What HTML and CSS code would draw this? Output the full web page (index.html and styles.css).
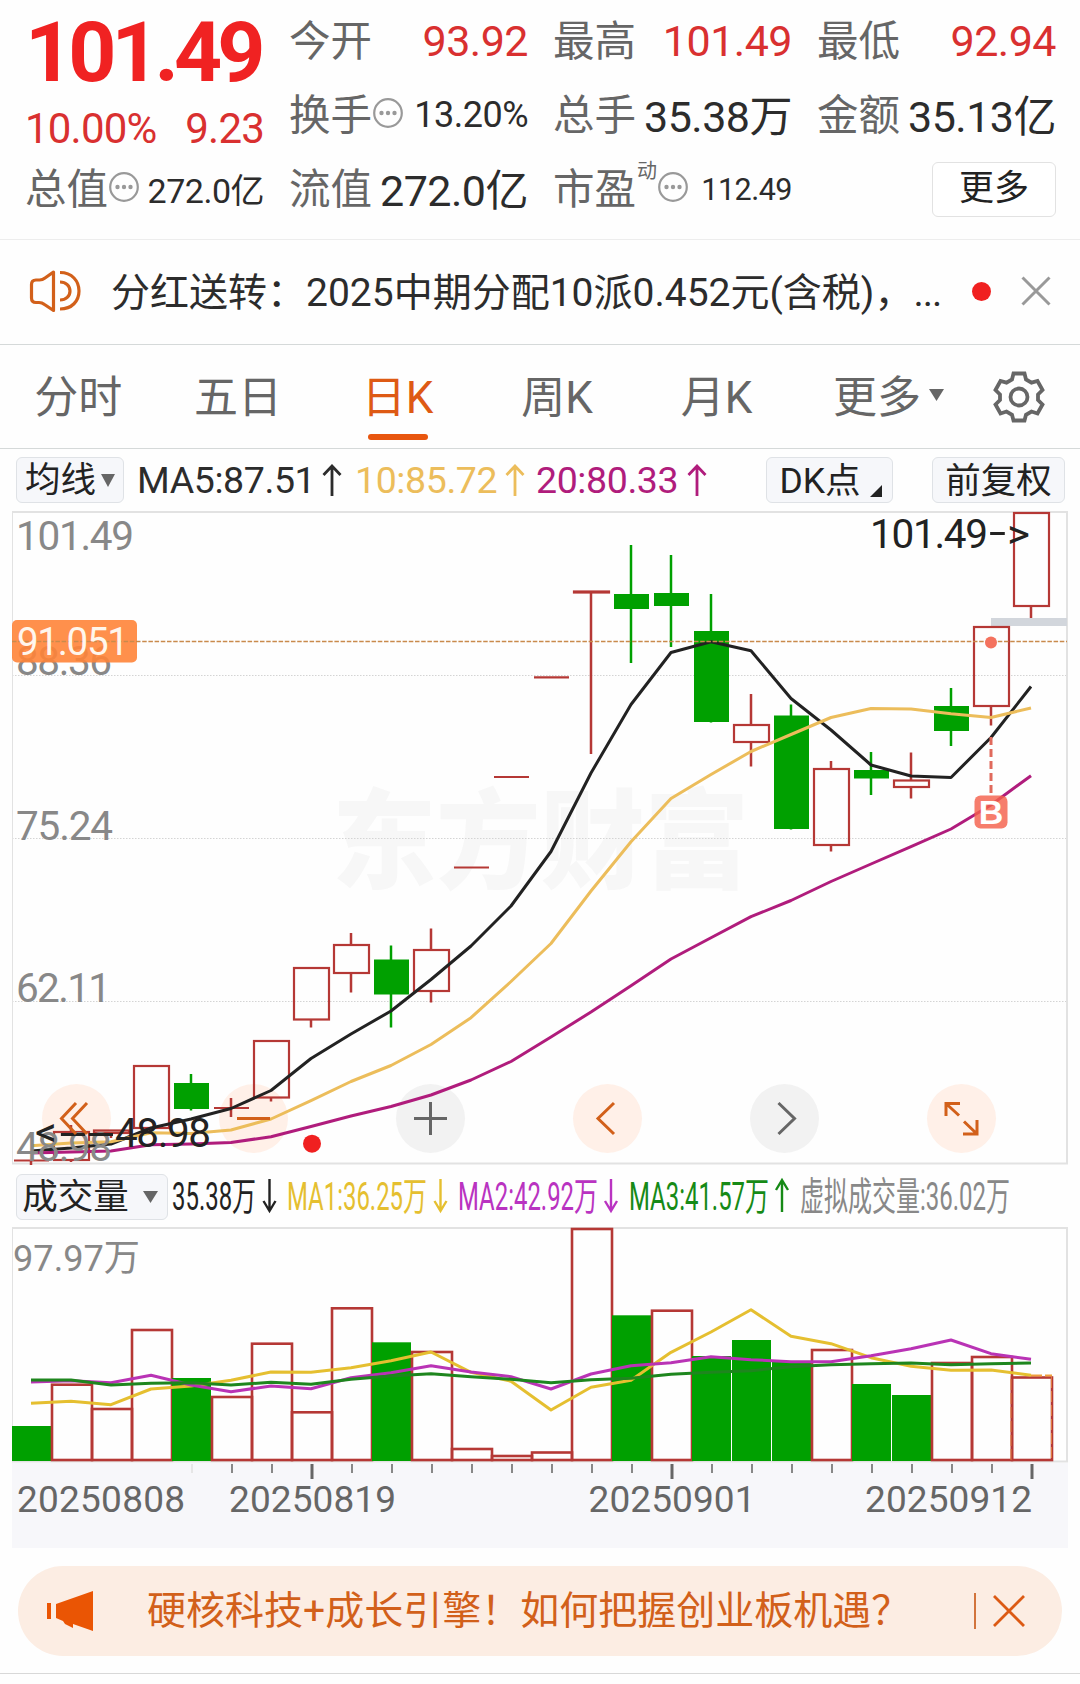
FILE: index.html
```
<!DOCTYPE html>
<html lang="zh-CN">
<head>
  <meta charset="UTF-8" />
  <title>日K</title>
  <meta name="viewport" content="width=device-width, initial-scale=1" />
  <link rel="stylesheet" href="styles.css">
</head>
<body>
  <svg class="defs" width="0" height="0">
    <symbol id="more-dots" viewBox="0 0 30 30">
      <circle cx="15" cy="15" r="13.8" fill="none" stroke="#999" stroke-width="2.2" />
      <circle cx="8.5" cy="15" r="2.2" fill="#999" />
      <circle cx="15" cy="15" r="2.2" fill="#999" />
      <circle cx="21.5" cy="15" r="2.2" fill="#999" />
    </symbol>
    <symbol id="arrow-up" viewBox="0 0 20 32">
      <path d="M10 32V2M1.5 11 10 2l8.500 9" fill="none" stroke="currentColor" stroke-width="2.8" />
    </symbol>
  </svg>

  <section class="quote">
    <div class="price">
      <div class="last">101.49</div>
      <div class="change"><span>10.00%</span><span>9.23</span></div>
    </div>
    <div class="cell"><span class="label">今开</span><span class="value red">93.92</span></div>
    <div class="cell"><span class="label">最高</span><span class="value red">101.49</span></div>
    <div class="cell"><span class="label">最低</span><span class="value red">92.94</span></div>
    <div class="cell"><span class="label">换手</span><svg class="dots"><use href="#more-dots" /></svg><span class="value mid">13.20%</span></div>
    <div class="cell"><span class="label">总手</span><span class="value unit">35.38万</span></div>
    <div class="cell"><span class="label">金额</span><span class="value unit">35.13亿</span></div>
    <div class="cell"><span class="label">总值</span><svg class="dots"><use href="#more-dots" /></svg><span class="value small">272.0亿</span></div>
    <div class="cell"><span class="label">流值</span><span class="value unit">272.0亿</span></div>
    <div class="cell"><span class="label">市盈</span><span class="sup">动</span><svg class="dots"><use href="#more-dots" /></svg><span class="value tiny">112.49</span></div>
    <div class="cell"><button class="more">更多</button></div>
  </section>

  <section class="notice">
    <svg class="speaker" viewBox="0 0 52 42" fill="none" stroke="#d2601a" stroke-width="3.2" stroke-linejoin="round">
      <path d="M24.500 2 16 8Q13.500 10 10.500 10H7Q2.500 10 2.500 14.500V28Q2.500 32.500 7 32.500H10Q13 32.500 15.500 34.500L24.500 40.500Z" />
      <path d="M31 2.500C43 2.500 50 11 50 21S43 39 31 39M31 12C37 12 41 16 41 21S37 30 31 30" />
    </svg>
    <p>分红送转：2025中期分配10派0.452元(含税)，<span class="ellipsis">...</span></p>
    <i class="dot"></i>
    <svg class="close" viewBox="0 0 30 30"><path d="M1.500 1.500l27 27M28.500 1.500l-27 27" stroke="#999" stroke-width="3" /></svg>
  </section>

  <nav class="tabs">
    <a>分时</a>
    <a>五日</a>
    <a class="active">日K</a>
    <a>周K</a>
    <a>月K</a>
    <a class="tab-more">更多<svg width="15" height="12" viewBox="0 0 15 12"><path d="M0 0h15L7.500 12z" fill="#666" /></svg></a>
    <svg class="gear" viewBox="0 0 52 52" fill="none" stroke="#666" stroke-width="3.800">
      <path d="M20.500 2.500H31.500L33 8.500L38.500 11.700L44.500 10L49.500 19L45 23.500V29L49.500 33.500L44.500 42.500L38.500 40.500L33 43.800L31.500 49.500H20.500L19 43.800L13.500 40.500L7.500 42.500L2.500 33.500L7 29V23.500L2.500 19L7.500 10L13.500 11.700L19 8.500Z" />
      <circle cx="26" cy="26" r="8.500" />
    </svg>
  </nav>

  <section class="ma-bar">
    <button class="chip chip-ma">均线<svg width="14" height="13" viewBox="0 0 14 13"><path d="M0 0h14L7 13z" fill="#666" /></svg></button>
    <span class="ma ma5"><b>MA5:87.51</b><svg><use href="#arrow-up" /></svg></span>
    <span class="ma ma10"><b>10:85.72</b><svg><use href="#arrow-up" /></svg></span>
    <span class="ma ma20"><b>20:80.33</b><svg><use href="#arrow-up" /></svg></span>
    <button class="chip chip-dk">DK点<svg width="12" height="12" viewBox="0 0 12 12"><path d="M12 0v12H0z" fill="#222" /></svg></button>
    <button class="chip chip-fq">前复权</button>
  </section>

  <svg class="kline" viewBox="0 505 1080 664">
    <text class="watermark" x="332" y="880" textLength="417" lengthAdjust="spacingAndGlyphs">东方财富</text>
    <path class="grid" d="M12 675.500H1067M12 838.500H1067M12 1001.500H1067" />
    <path class="frame thin" d="M12.500 512V1164" />
    <path class="frame" d="M12 512H1067V1163.500H12" />

    <g class="tools">
      <circle class="warm" cx="76.500" cy="1118.500" r="34.500" />
      <circle class="warm" cx="253.500" cy="1118.500" r="34.500" />
      <circle class="cool" cx="430.500" cy="1118.500" r="34.500" />
      <circle class="warm" cx="607.500" cy="1118.500" r="34.500" />
      <circle class="cool" cx="784.500" cy="1118.500" r="34.500" />
      <circle class="warm" cx="961.500" cy="1118.500" r="34.500" />
    </g>

    <rect x="991" y="618" width="76" height="8" fill="#d2d6dc" />
    <g id="candles"></g>
    <g id="maLines"></g>

    <g class="axis">
      <text x="16" y="550" textLength="118">101.49</text>
      <text x="16" y="675" textLength="96">88.36</text>
      <text x="16" y="839.500" textLength="97">75.24</text>
      <text x="16" y="1002" textLength="95">62.11</text>
      <text x="16" y="1161" textLength="96">48.98</text>
    </g>

    <rect x="12" y="620" width="125" height="42.500" rx="5" fill="#ff8438" fill-opacity="0.9" />
    <path d="M12 641.500H1067" stroke="#c98a4c" stroke-width="1.500" stroke-dasharray="4.500 1.700" />
    <text class="cost" x="17" y="654.500" textLength="112">91.051</text>

    <g class="extreme">
      <text x="870" y="548" textLength="118">101.49</text>
      <text x="989" y="546" textLength="17" lengthAdjust="spacingAndGlyphs">-</text>
      <text x="1007" y="548" textLength="23" lengthAdjust="spacingAndGlyphs">&gt;</text>
      <text x="35" y="1146" textLength="22" lengthAdjust="spacingAndGlyphs">&lt;</text>
      <text x="59" y="1147" textLength="56" lengthAdjust="spacingAndGlyphs">--</text>
      <text x="115" y="1146.500" textLength="96">48.98</text>
    </g>

    <!-- buy mark -->
    <circle cx="991" cy="642.500" r="6" fill="#f4725e" />
    <path d="M991 737V795" stroke="#e06a5c" stroke-width="3" stroke-dasharray="8 4" />
    <rect x="974.500" y="795.500" width="33" height="33" rx="6" fill="#f4604c" fill-opacity="0.820" />
    <text class="buy" x="991" y="823.500">B</text>

    <circle cx="312" cy="1143.700" r="9" fill="#f02020" />

    <g class="tool-icons">
      <path d="M76 1103 61.500 1118.500 76 1134M87 1103 72.500 1118.500 87 1134" />
      <path d="M237 1118.500H270" />
      <path class="dark" d="M414 1118.500H447M430.500 1102V1135" />
      <path d="M614 1103 598 1118.500 614 1134" />
      <path class="dark" d="M778.500 1103 794.500 1118.500 778.500 1134" />
      <path d="M946 1116V1103.500H960M946 1103.500 959 1115.500M964 1121.500 977 1134M977 1120V1134H963" />
    </g>
  </svg>

  <section class="vol-bar">
    <button class="chip chip-vol">成交量<svg width="15" height="12" viewBox="0 0 15 12"><path d="M0 0h15L7.500 12z" fill="#666" /></svg></button>
    <svg class="vol-text" viewBox="168 1169 912 55">
      <g fill="#222" stroke="#222">
        <text x="172" y="1209.500" textLength="84" lengthAdjust="spacingAndGlyphs">35.38万</text>
        <path d="M269.500 1179V1211M263.500 1201 269.500 1211 275.500 1201" />
      </g>
      <g fill="#e5bf30" stroke="#e5bf30">
        <text x="287" y="1209.500" textLength="140" lengthAdjust="spacingAndGlyphs">MA1:36.25万</text>
        <path d="M440.500 1179V1211M434.500 1201 440.500 1211 446.500 1201" />
      </g>
      <g fill="#b933c1" stroke="#b933c1">
        <text x="458" y="1209.500" textLength="140" lengthAdjust="spacingAndGlyphs">MA2:42.92万</text>
        <path d="M611 1179V1211M605 1201 611 1211 617 1201" />
      </g>
      <g fill="#168a16" stroke="#168a16">
        <text x="629" y="1209.500" textLength="140" lengthAdjust="spacingAndGlyphs">MA3:41.57万</text>
        <path d="M782 1212V1180M776 1190 782 1180 788 1190" />
      </g>
      <g fill="#888" stroke="#888">
        <text x="800" y="1209.500" textLength="210" lengthAdjust="spacingAndGlyphs">虚拟成交量:36.02万</text>
      </g>
    </svg>
  </section>

  <svg class="volume" viewBox="0 1224 1080 330">
    <rect x="12" y="1463" width="1056" height="85" fill="#f7f7fa" />
    <path class="frame thin" d="M12.500 1228V1461" />
    <path class="frame" d="M12 1228H1067V1461.500H12" />
    <g id="bars"></g>
    <g id="volLines"></g>
    <path d="M1031 1375.500H1052" fill="none" stroke="#f0a03c" stroke-width="2" stroke-dasharray="11 3" />
    <path d="M1011 1460V1377M1051.500 1377V1460" fill="none" stroke="#e07a3c" stroke-width="1" stroke-dasharray="11 3" />
    <g id="ticks"></g>
    <text class="vol-max" x="13" y="1271" textLength="127" lengthAdjust="spacingAndGlyphs">97.97万</text>
    <g class="dates">
      <text x="17" y="1512" textLength="168">20250808</text>
      <text x="229" y="1512" textLength="167">20250819</text>
      <text x="588.500" y="1512" textLength="167">20250901</text>
      <text x="865" y="1512" textLength="167">20250912</text>
    </g>
  </svg>

  <section class="banner">
    <svg class="horn" viewBox="0 0 47 40" fill="#ea5504">
      <path d="M0 12h4v16H0zM9 13 46 0v40L26 33V37L18 33 16 30 9 27z" />
    </svg>
    <p>硬核科技+成长引擎！如何把握创业板机遇？</p>
    <i class="divider"></i>
    <svg class="banner-close" viewBox="0 0 32 32"><path d="M1 1l30 30M31 1L1 31" stroke="#dc5a14" stroke-width="2.800" /></svg>
  </section>
  <div class="bottom-line"></div>

  <script>
    const STEP = 40;
    const START = 31;
    const RED = '#b53835';
    const GREEN = '#00a000';

    // [up, body top, body bottom, high, low]
    const candles = [
      [1, 1160.5, 1160.5, 1160.5, 1165], [1, 1132, 1160, 1125, 1162], [1, 1130.5, 1133, 1130, 1138],
      [1, 1066, 1128, 1066, 1128], [0, 1083, 1109, 1074, 1110.5], [1, 1108, 1108, 1098, 1117],
      [1, 1041, 1097.5, 1041, 1101.5], [1, 968, 1019.5, 968, 1027.5], [1, 945, 973, 933, 992.5],
      [0, 959.5, 994.5, 945.5, 1027.5], [1, 950, 991, 928.5, 1002.5], [1, 867.5, 867.5, 867.5, 867.5],
      [1, 777, 777, 777, 777], [1, 677.3, 677.3, 677.3, 677.3], [1, 591.5, 592.5, 592, 754],
      [0, 594, 609, 545, 663], [0, 593, 606, 555, 647], [0, 631, 722, 594, 722.5],
      [1, 725, 742, 694, 766.5], [0, 715.5, 829, 704.5, 829.5], [1, 769, 845, 761, 851.5],
      [0, 770, 778.5, 752, 795], [1, 780.5, 787, 752.5, 798.5], [0, 706, 731, 688, 746],
      [1, 627, 706, 627, 725.5], [1, 513, 606, 513, 618]
    ];

    const ma = [
      ['#222', [1151, 1148, 1144, 1128, 1119, 1108.5, 1090.5, 1058.5, 1034, 1011, 979.5, 946, 906, 851.5, 773, 704.5, 652.5, 641.7, 650.7, 698.5, 730, 765, 776, 777.5, 737.5, 686.5]],
      ['#ecbd5b', [1145.7, 1143, 1141.7, 1132.7, 1133.5, 1130, 1119, 1100.7, 1081.5, 1065.5, 1044.5, 1017.7, 981.5, 943.5, 891, 841.7, 798.5, 774.5, 751.5, 734.5, 717.5, 708.5, 709, 713.7, 717.5, 708]],
      ['#b01c7c', [1153, 1152, 1151, 1144.7, 1144, 1142.5, 1136.7, 1126.5, 1116, 1106.5, 1095, 1080, 1061.5, 1037, 1012, 985.7, 959, 937.7, 916.7, 900.5, 881.5, 864, 846.7, 829, 805, 775.7]]
    ];

    // [up, bar top]
    const vols = [
      [0, 1426], [1, 1384.7], [1, 1409], [1, 1330], [0, 1378], [1, 1397], [1, 1343.7], [1, 1412.3], [1, 1308.3],
      [0, 1342.3], [1, 1352], [1, 1449], [1, 1456], [1, 1452.5], [1, 1229], [0, 1315.3], [1, 1310.7], [0, 1356],
      [0, 1340], [0, 1361.7], [1, 1350], [0, 1384], [0, 1395], [1, 1363], [1, 1357], [1, 1377.5]
    ];

    const volMa = [
      ['#e5bf30', [1403.3, 1401.3, 1404.7, 1389, 1386, 1380.3, 1372, 1372.3, 1367.7, 1360.7, 1352, 1372.3, 1381.3, 1410, 1387.3, 1380.3, 1352.3, 1332, 1309.7, 1336.3, 1343.7, 1357.7, 1366.3, 1370.3, 1370, 1375.3]],
      ['#b933b5', [1382, 1380.7, 1382.7, 1375.3, 1385, 1391.7, 1386, 1388.7, 1377.7, 1372.7, 1365.7, 1372, 1376.7, 1389, 1374, 1365.7, 1362.7, 1356.7, 1359.7, 1361.7, 1361.7, 1355.7, 1348.7, 1340, 1353.7, 1359.3]],
      ['#1e861e', [1380, 1380, 1385, 1383.3, 1382.7, 1385, 1382.3, 1384.3, 1379.3, 1376, 1373.7, 1376.7, 1379.3, 1382.7, 1379.7, 1378.3, 1374.3, 1372.3, 1370.7, 1366.7, 1364.7, 1363.7, 1363, 1364.7, 1363.7, 1363]]
    ];

    function x(i) {
      return START + i * STEP;
    }

    function drawLines(id, lines) {
      document.getElementById(id).innerHTML = lines.map(([color, ys]) =>
        `<polyline points="${ys.map((y, i) => x(i) + ',' + y).join(' ')}" fill="none" stroke="${color}" stroke-width="3" stroke-linejoin="round" />`
      ).join('');
    }

    document.getElementById('candles').innerHTML = candles.map(([up, top, bottom, high, low], i) => {
      const cx = x(i);
      if (!up) {
        return `<path d="M${cx} ${high}V${low}" stroke="${GREEN}" stroke-width="2.5" />
          <rect x="${cx - 17}" y="${top}" width="35" height="${bottom - top}" fill="${GREEN}" />`;
      }
      const wick = `<path d="M${cx} ${high}V${top}M${cx} ${bottom}V${low}" stroke="${RED}" stroke-width="2.5" />`;
      if (top === bottom) {
        return wick + `<path d="M${cx - 17} ${top}H${cx + 18}" stroke="${RED}" stroke-width="2.2" />`;
      }
      return wick + `<rect x="${cx - 17}" y="${top}" width="35" height="${bottom - top}" fill="none" stroke="${RED}" stroke-width="2.2" />`;
    }).join('');

    document.getElementById('bars').innerHTML = vols.map(([up, top], i) => {
      const left = x(i) - 19;
      if (up) {
        return `<rect x="${left}" y="${top}" width="40" height="${1460 - top}" fill="none" stroke="${RED}" stroke-width="2.6" />`;
      }
      return `<rect x="${left}" y="${top}" width="39" height="${1461 - top}" fill="${GREEN}" />`;
    }).join('');

    drawLines('maLines', ma);
    drawLines('volLines', volMa);

    let ticks = '';
    for (let i = 4; i < 26; i++) {
      const major = i === 7 || i === 16 || i === 25;
      const color = i === 4 ? '#e6e6e6' : major ? '#666' : '#888';
      ticks += `<path d="M${x(i) + 1} 1464V${major ? 1479 : 1473}" stroke="${color}" stroke-width="${major ? 3 : 2}" />`;
    }
    document.getElementById('ticks').innerHTML = ticks;
  </script>
</body>
</html>
```
FILE: styles.css
```
* {
  box-sizing: border-box;
}
body {
  margin: 0;
  width: 1080px;
  height: 1684px;
  overflow: hidden;
  background: #fefefe;
  color: #2c2c2c;
  font-family: Roboto, "Noto Sans CJK SC", sans-serif;
}
p {
  margin: 0;
}
button {
  font-family: inherit;
  color: #222;
  padding: 0;
}
svg {
  display: block;
  flex: none;
}
.defs {
  display: none;
}

/* quote header */
.quote {
  display: grid;
  grid-template-columns: repeat(4, 239px);
  grid-template-rows: repeat(3, 74px);
  column-gap: 25px;
  padding: 4px 24px 0 25px;
  height: 240px;
  border-bottom: 1px solid #ededed;
}
.price {
  grid-row: span 2;
}
.last {
  height: 96px;
  line-height: 98px;
  font-size: 84px;
  font-weight: 700;
  letter-spacing: -5px;
  color: #f02222;
}
.change {
  display: flex;
  justify-content: space-between;
  height: 56px;
  line-height: 58px;
  font-size: 42px;
  letter-spacing: -0.8px;
  color: #d93030;
}
.cell {
  display: flex;
  align-items: center;
  white-space: nowrap;
}
.label {
  padding-bottom: 6px;
  font-size: 41.5px;
  color: #666;
}
.value {
  margin-left: auto;
  font-size: 43px;
  letter-spacing: -0.5px;
}
.unit {
  padding-bottom: 5px;
}
.red {
  color: #d93030;
}
.mid {
  font-size: 36px;
}
.small {
  padding-bottom: 2px;
  font-size: 34px;
}
.tiny {
  font-size: 30.5px;
}
.dots {
  width: 30px;
  height: 30px;
  margin: -4px 0 0 1px;
}
.sup {
  align-self: flex-start;
  margin: 3px 0 0 1px;
  font-size: 20px;
  color: #666;
}
.more {
  margin-left: auto;
  width: 124px;
  height: 55px;
  border: 1.5px solid #e2e2e2;
  border-radius: 6px;
  background: #fff;
  font-size: 35px;
  line-height: 48px;
}

/* notice */
.notice {
  display: flex;
  align-items: center;
  height: 105px;
  padding: 0 0 2px 29px;
  border-bottom: 1px solid #d5d9d9;
  font-size: 39px;
  white-space: nowrap;
}
.speaker {
  width: 52px;
  height: 42px;
}
.notice p {
  width: 890px;
  padding: 0 0 5px 30px;
}
.ellipsis {
  letter-spacing: -1px;
}
.dot {
  width: 19px;
  height: 19px;
  margin-left: 1px;
  border-radius: 50%;
  background: #f02020;
}
.close {
  width: 30px;
  height: 30px;
  margin-left: 30px;
}

/* period tabs */
.tabs {
  display: flex;
  align-items: center;
  height: 104px;
  border-bottom: 1px solid #d5d9d9;
  font-size: 44px;
  color: #666;
}
.tabs a {
  display: flex;
  justify-content: center;
  align-items: center;
  width: 159.6px;
  height: 103px;
  padding: 0 3px 6px 0;
}
.tabs .active {
  position: relative;
  color: #de5a14;
}
.active::after {
  content: "";
  position: absolute;
  left: 50%;
  bottom: 8px;
  width: 60px;
  height: 6px;
  margin-left: -31px;
  border-radius: 3px;
  background: #e8560f;
}
.tabs .tab-more {
  width: 195px;
  justify-content: flex-start;
  padding-left: 35px;
}
.tab-more svg {
  margin: 3px 0 0 8px;
}
.gear {
  width: 52px;
  height: 52px;
}

/* ma row */
.ma-bar {
  display: flex;
  align-items: flex-start;
  height: 56px;
  padding: 8px 0 0 16px;
}
.chip {
  display: flex;
  justify-content: center;
  align-items: center;
  height: 46px;
  border: 1.5px solid #dfe2e6;
  border-radius: 6px;
  background: #f6f7fa;
  font-size: 35.5px;
  line-height: 40px;
  white-space: nowrap;
}
.chip-ma {
  width: 108px;
}
.chip-ma svg {
  margin-left: 5px;
}
.chip-dk {
  width: 127px;
  margin-left: 59px;
  padding: 2px 0 0 2px;
}
.chip-dk svg {
  align-self: flex-end;
  margin: 0 0 5px 9px;
}
.chip-fq {
  width: 133px;
  margin-left: 39px;
  padding-top: 2px;
}
.ma {
  display: flex;
  justify-content: space-between;
  align-items: center;
  height: 46px;
  font-size: 37.5px;
  letter-spacing: -0.4px;
}
.ma b {
  font-weight: 400;
}
.ma svg {
  width: 20px;
  height: 32px;
}
.ma5 {
  width: 205px;
  margin-left: 13px;
}
.ma10 {
  width: 170px;
  margin-left: 13px;
  color: #ecbd5b;
}
.ma20 {
  width: 171px;
  margin-left: 11px;
  color: #b01c7c;
}

/* k-line chart */
.kline {
  width: 1080px;
  height: 664px;
}
.frame {
  fill: none;
  stroke: #e2e2e2;
  stroke-width: 2;
}
.thin {
  stroke-width: 1;
}
.grid {
  stroke: #d4d4d4;
  stroke-width: 1;
  stroke-dasharray: 1.5 1.5;
}
.watermark {
  font-size: 108px;
  font-weight: 900;
  fill: #f7f7f7;
}
.warm {
  fill: #fff0e8;
}
.cool {
  fill: #f2f2f2;
}
.axis text {
  font-size: 40.5px;
  fill: #888;
}
.cost {
  font-size: 38.5px;
  fill: #fff6ec;
}
.extreme text {
  font-size: 40.5px;
  fill: #222;
}
.buy {
  font-family: "Liberation Sans", sans-serif;
  font-size: 34px;
  font-weight: 700;
  text-anchor: middle;
  fill: #fff;
}
.tool-icons path {
  fill: none;
  stroke: #d2601a;
  stroke-width: 3;
}
.tool-icons .dark {
  stroke: #666;
}

/* volume */
.vol-bar {
  display: flex;
  height: 55px;
  padding: 5px 0 0 16px;
}
.chip-vol {
  width: 152px;
  padding-right: 4px;
  font-size: 35.5px;
}
.chip-vol svg {
  margin-left: 14px;
}
.vol-text {
  width: 912px;
  height: 55px;
  margin-top: -5px;
  overflow: visible;
  font-size: 38.5px;
}
.vol-text text {
  stroke: none;
}
.vol-text path {
  fill: none;
  stroke-width: 2.4;
}
.volume {
  width: 1080px;
  height: 330px;
}
.vol-max {
  font-size: 37px;
  fill: #888;
}
.dates {
  font-size: 37px;
  fill: #666;
}

/* banner */
.banner {
  display: flex;
  align-items: center;
  height: 90px;
  margin: 12px 18px 0;
  padding-left: 29px;
  border-radius: 45px;
  background: #fcede3;
  color: #d2601a;
  font-size: 39px;
  white-space: nowrap;
}
.horn {
  width: 47px;
  height: 40px;
}
.banner p {
  width: 880px;
  padding: 0 0 8px 53px;
}
.divider {
  width: 1.5px;
  height: 36px;
  background: #d2743c;
}
.banner-close {
  width: 32px;
  height: 32px;
  margin-left: 17px;
}
.bottom-line {
  margin-top: 17px;
  height: 1px;
  background: #d8d8d8;
}
```
